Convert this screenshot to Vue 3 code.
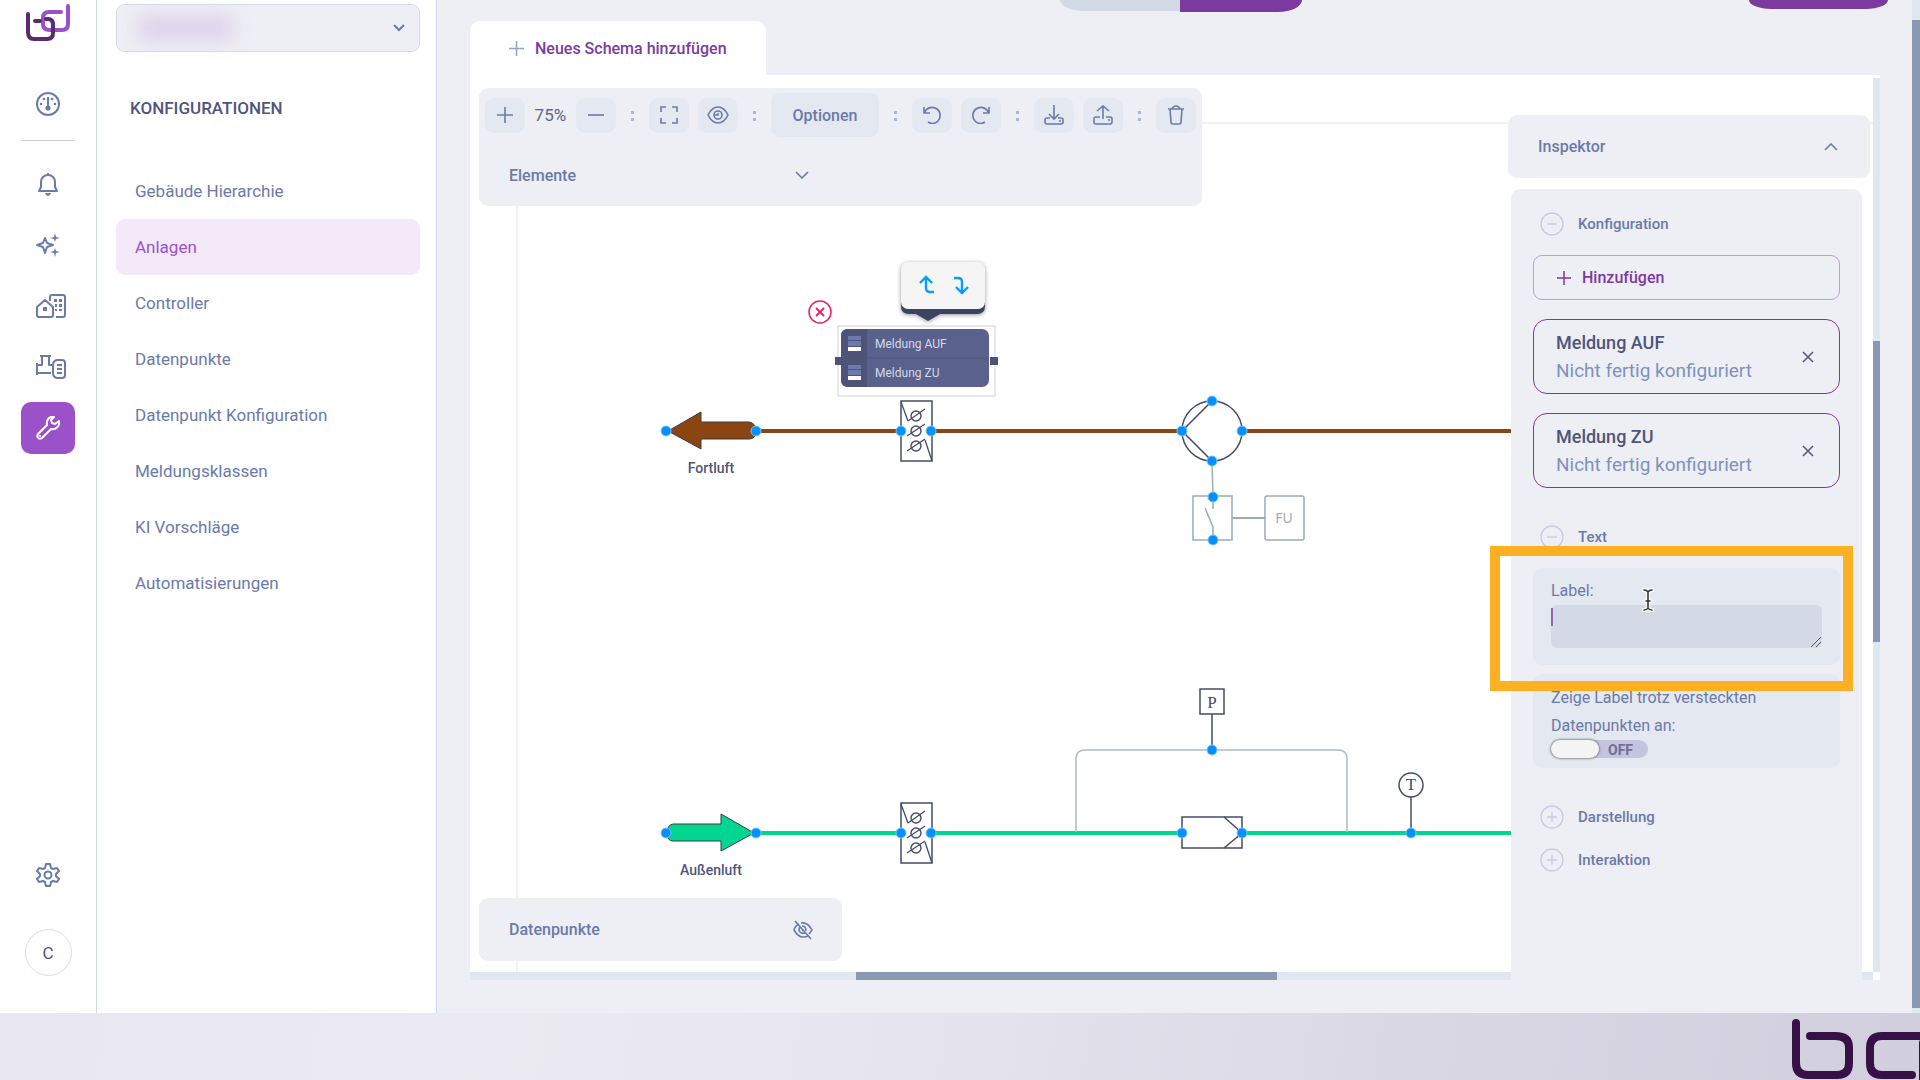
<script setup>
import { ref } from 'vue'

const navItems = [
  'Gebäude Hierarchie',
  'Anlagen',
  'Controller',
  'Datenpunkte',
  'Datenpunkt Konfiguration',
  'Meldungsklassen',
  'KI Vorschläge',
  'Automatisierungen',
]
const activeItem = ref('Anlagen')
const messages = ['Meldung AUF', 'Meldung ZU']
const label = ref('')
const showLabel = ref(false)

const ports = [
  [666, 431], [756, 431], [901, 431], [931, 431],
  [1182, 431], [1242, 431], [1212, 401], [1212, 461],
  [1213, 497], [1213, 540],
  [666, 833], [756, 833], [901, 833], [931, 833],
  [1182, 833], [1242, 833], [1212, 750], [1411, 833],
]
const dampers = [431, 833]
</script>

<template>
  <div class="page">
    <div class="app">
      <aside class="rail">
        <svg class="logo" width="44" height="38" viewBox="0 0 44 38" fill="none" stroke-width="4" stroke-linecap="round">
          <path d="M42 2v18q0 6-6 6H24q-7 0-7-6V14q0-6 6-6h12" stroke="#9b51c8" />
          <path d="M2 10v18q0 7 6 7h13q6 0 6-6V21q0-6-5-6h-2M9 17h5" stroke="#592b70" />
        </svg>
        <button class="rail-btn gauge" aria-label="Dashboard">
          <svg width="24" height="24" viewBox="0 0 24 24" fill="none" stroke="currentColor" stroke-width="2">
            <circle cx="12" cy="12" r="11" />
            <path d="M12 5v12" />
            <g fill="currentColor" stroke="none">
              <circle cx="12" cy="16" r="2.600" /><circle cx="8" cy="7" r="1.300" /><circle cx="16" cy="7" r="1.300" />
              <circle cx="5" cy="12" r="1.300" /><circle cx="19" cy="12" r="1.300" />
            </g>
          </svg>
        </button>
        <hr class="rail-line" />
        <nav class="rail-nav" aria-label="Hauptmenü">
          <button class="rail-btn" aria-label="Meldungen">
            <svg width="24" height="24" viewBox="0 0 24 24" fill="none" stroke="currentColor" stroke-width="2" stroke-linejoin="round">
              <path d="M12 1v2M3 19h18l-2-4v-5c0-4-3-7-7-7s-7 3-7 7v5z" />
              <path d="M9 21h6q-1 3-3 3t-3-3z" fill="currentColor" stroke="none" />
            </svg>
          </button>
          <button class="rail-btn" aria-label="Assistent">
            <svg width="24" height="24" viewBox="0 0 24 24" fill="none" stroke="currentColor" stroke-width="2" stroke-linejoin="round">
              <path d="M9 5l2 5 6 2-6 2-2 6-2-6-6-2 6-2z" />
              <path d="M19 0l1 4 4 1-4 1-1 3-1-3-4-1 4-1zM19 15l1 3 4 1-4 1-1 4-1-4-4-1 4-1z" fill="currentColor" stroke="none" />
            </svg>
          </button>
          <button class="rail-btn wide" aria-label="Gebäude">
            <svg width="30" height="24" viewBox="0 0 30 24" fill="none" stroke="currentColor" stroke-width="2" stroke-linejoin="round">
              <path d="M1 13l8-7 8 7v8q0 2-2 2H3q-2 0-2-2zM14 7V3q0-2 2-2h11q2 0 2 2v18q0 2-2 2h-7" />
              <path d="M7 13h4v4H7zM18 5h3v3h-3zM23 5h3v3h-3zM19 10h2v3h-2zM23 10h3v3h-3zM19 15h2v2h-2zM23 15h3v2h-3z" fill="currentColor" stroke="none" />
            </svg>
          </button>
          <button class="rail-btn wide" aria-label="Geräte">
            <svg width="30" height="24" viewBox="0 0 30 24" fill="none" stroke="currentColor" stroke-width="2" stroke-linejoin="round">
              <path d="M4 1h11M6 1v9H1M13 1v9h3M1 8v12M1 18h14" />
              <path d="M21 5h5q3 0 3 3v12q0 3-3 3h-5q-4-1-4-5v-8q0-4 4-5zM21 10h5M21 14h5M21 18h5" />
            </svg>
          </button>
          <button class="rail-btn active" aria-label="Konfiguration">
            <svg width="24" height="24" viewBox="0 0 24 24" fill="none" stroke="currentColor" stroke-width="2" stroke-linejoin="round">
              <path d="M18 1c-5-1-8 3-7 8l-9 9c-2 3 1 6 4 4l9-9c5 1 9-3 8-8l-4 3-3-1-1-3z" />
              <circle cx="4" cy="20" r="1" fill="currentColor" stroke="none" />
            </svg>
          </button>
        </nav>
        <div class="rail-foot">
          <button class="rail-btn" aria-label="Einstellungen">
            <svg width="24" height="24" viewBox="0 0 24 24" fill="none" stroke="currentColor" stroke-width="2" stroke-linejoin="round">
              <path d="M10 1h4l1 4 2 1 4-1 2 3-3 3v2l3 3-2 3-4-1-2 1-1 4h-4l-1-4-2-1-4 1-2-3 3-3v-2L1 8l2-3 4 1 2-1z" />
              <circle cx="12" cy="12" r="3.500" />
            </svg>
          </button>
          <button class="avatar">C</button>
        </div>
      </aside>

      <aside class="side">
        <div class="picker">
          <select aria-label="Gebäude auswählen"><option></option></select>
          <span class="picker-blur"></span>
          <svg width="12" height="8" viewBox="0 0 12 8" fill="none" stroke="#6b7aa9" stroke-width="2"><path d="M1 1l5 5 5-5" /></svg>
        </div>
        <h2>KONFIGURATIONEN</h2>
        <nav class="side-nav" aria-label="Konfigurationen">
          <a v-for="item in navItems" :key="item" href="#" :class="{ current: item === activeItem }" @click.prevent="activeItem = item">{{ item }}</a>
        </nav>
      </aside>

      <main class="main">
        <header class="top">
          <button class="tab">
            <svg width="15" height="15" viewBox="0 0 15 15" stroke="#8fa3c6" stroke-width="1.500"><path d="M7.500 0v15M0 7.500h15" /></svg>
            Neues Schema hinzufügen
          </button>
          <div class="modes">
            <button class="mode-off" aria-label="Ansicht"></button>
            <button class="mode-on" aria-label="Bearbeiten"></button>
          </div>
          <button class="save" aria-label="Speichern"></button>
        </header>

        <section class="stage">
          <div class="canvas">
            <svg class="diagram" width="100%" height="100%" fill="none">
              <g transform="translate(-470 -78)">
                <path d="M517 975V123h1360" stroke="#f1f2f4" stroke-width="2" />
                <path d="M756 431h800" stroke="#8b4513" stroke-width="4" />
                <path d="M756 833h800" stroke="#00d68f" stroke-width="4" />
                <path d="M668 431l33-19v10h48q7 1 7 9t-7 8h-48v10z" fill="#8b4513" stroke="#3c3c3c" />
                <path d="M754 833l-33-19v10h-48q-6 1-6 9t6 8h48v10z" fill="#00d68f" stroke="#3c3c3c" />

                <g v-for="y in dampers" :key="y" :transform="`translate(901 ${y - 30})`" stroke="#454b6b">
                  <rect width="31" height="60" fill="#fff" stroke-width="1.500" />
                  <path d="M0 1l7 19M24 39l7 21M7 20l17-12M6 35l18-12M6 50l18-12" stroke-width="1.300" />
                  <g stroke-width="1.400"><circle cx="15" cy="15" r="5" /><circle cx="15" cy="30" r="5" /><circle cx="15" cy="45" r="5" /></g>
                </g>

                <circle cx="1212" cy="431" r="30" fill="#fff" stroke="#454b6b" stroke-width="1.500" />
                <path d="M1212 401l-30 30 30 30" stroke="#454b6b" stroke-width="1.500" />
                <g stroke="#9dacb4" stroke-width="1.500">
                  <path d="M1212 461l1 36v12M1205 508l8 19v13" />
                  <path d="M1232 518h33" stroke-width="2" />
                  <rect x="1193" y="496" width="39" height="44" />
                  <rect x="1265" y="496" width="39" height="44" rx="2" />
                </g>
                <text class="fu" x="1284" y="523">FU</text>

                <path d="M1076 832V759q0-9 9-9h253q9 0 9 9v73" stroke="#b0bbc2" stroke-width="1.500" />
                <g stroke="#454b6b" stroke-width="1.500">
                  <rect x="1182" y="817" width="60" height="31" fill="#fff" />
                  <path d="M1224 817l18 16-18 15M1212 714v36M1411 797v36" />
                  <rect x="1200" y="689" width="24" height="25" />
                  <circle cx="1411" cy="785" r="12" />
                </g>
                <text class="sensor" x="1212" y="708">P</text>
                <text class="sensor" x="1411" y="790">T</text>

                <text class="caption" x="711" y="473">Fortluft</text>
                <text class="caption" x="711" y="875">Außenluft</text>

                <circle v-for="([x, y], i) in ports" :key="i" :cx="x" :cy="y" r="5" fill="#0090ff" stroke="#7cc4ff" />

                <rect x="838" y="326" width="157" height="70" fill="#fff" stroke="#cfcfe6" />
                <path d="M835 357h8v8h-8zM990 357h8v8h-8z" fill="#4e5376" />
                <rect x="841" y="329" width="148" height="58" rx="7" fill="#5a618c" />
                <path d="M867 329h-19q-7 0-7 7v44q0 7 7 7h19z" fill="#4e5478" />
                <path d="M867 358h122" stroke="#535981" />
                <g v-for="y in [336, 365]" :key="y">
                  <path :d="`M848 ${y}h13v4h-13zM848 ${y + 5}h13v5h-13z`" fill="#6b79ad" />
                  <path :d="`M848 ${y + 11}h13v4h-13z`" fill="#fff" />
                </g>
                <text class="point" x="875" y="348">Meldung AUF</text>
                <text class="point" x="875" y="377">Meldung ZU</text>

                <circle cx="820" cy="312" r="11" fill="#fff" stroke="#e91e63" stroke-width="1.500" />
                <path d="M816 308l8 8M824 308l-8 8" stroke="#e91e63" stroke-width="1.800" />

                <g class="bubble">
                  <path d="M901 300h84v6q0 8-8 8h-37l-12 7-12-7h-7q-8 0-8-8z" fill="#3d4263" />
                  <rect x="901" y="262" width="84" height="47" rx="7" fill="#f5f5f5" />
                </g>
                <path d="M934 292h-4q-4 0-4-4v-10M920 283l6-6 6 6M954 278h4q4 0 4 4v10M956 287l6 6 6-6" stroke="#0a9bff" stroke-width="2.400" />
              </g>
            </svg>
          </div>
          <div class="scroll-v"><i></i></div>
          <div class="scroll-h"><i></i></div>

          <div class="toolbar">
            <div class="tools">
              <button class="tool" aria-label="Vergrößern"><svg width="16" height="16" viewBox="0 0 16 16"><path d="M8 0v16M0 8h16" /></svg></button>
              <span class="zoom">75%</span>
              <button class="tool" aria-label="Verkleinern"><svg width="16" height="16" viewBox="0 0 16 16"><path d="M0 8h16" /></svg></button>
              <span class="dots"></span>
              <button class="tool" aria-label="Vollbild"><svg width="18" height="18" viewBox="0 0 18 18"><path d="M1 6V1h5M12 1h5v5M17 12v5h-5M6 17H1v-5" /></svg></button>
              <button class="tool next" aria-label="Vorschau"><svg width="22" height="18" viewBox="0 0 22 18"><path d="M1 9q4-8 10-8t10 8q-4 8-10 8T1 9z" /><circle cx="11" cy="9" r="4" /><path d="M11 7v2H8" /></svg></button>
              <span class="dots"></span>
              <button class="options">Optionen</button>
              <span class="dots"></span>
              <button class="tool" aria-label="Rückgängig"><svg width="18" height="18" viewBox="0 0 18 18"><path d="M1 1v6h6M1 7C4 1 10 0 14 3s4 9 1 12-7 3-10 1" /></svg></button>
              <button class="tool next" aria-label="Wiederholen"><svg width="18" height="18" viewBox="0 0 18 18"><path d="M17 1v6h-6M17 7C14 1 8 0 4 3s-4 9-1 12 7 3 10 1" /></svg></button>
              <span class="dots"></span>
              <button class="tool" aria-label="Exportieren"><svg width="20" height="20" viewBox="0 0 20 20"><path d="M10 0v14M5 9l5 5 5-5M6 13H3q-2 0-2 2v2q0 2 2 2h14q2 0 2-2v-2q0-2-2-2h-3M15 16h2" /></svg></button>
              <button class="tool next" aria-label="Importieren"><svg width="20" height="20" viewBox="0 0 20 20"><path d="M10 14V1M4 6l6-5 6 5M7 12H3q-2 0-2 2v3q0 2 2 2h14q2 0 2-2v-3q0-2-2-2h-4M15 15h2" /></svg></button>
              <span class="dots"></span>
              <button class="tool" aria-label="Löschen"><svg width="18" height="20" viewBox="0 0 18 20"><path d="M1 4h16M3 4l1 13q0 2 2 2h6q2 0 2-2l1-13M5 4q1-3 4-3t4 3" /></svg></button>
            </div>
            <button class="fold">Elemente
              <svg width="14" height="8" viewBox="0 0 14 8"><path d="M1 1l6 6 6-6" /></svg>
            </button>
          </div>

          <button class="points">Datenpunkte
            <svg width="20" height="20" viewBox="0 0 20 20"><path d="M2 1l16 18M6 4C3 5 1 9 1 10q4 7 9 7 3 0 5-1M8 3q7-1 11 7l-3 4M7 7q-2 3 0 5t5 1M9 6q4 0 4 5M9 9l1 2" /></svg>
          </button>

          <aside class="inspector">
            <button class="inspector-head">Inspektor
              <svg width="14" height="8" viewBox="0 0 14 8"><path d="M1 7l6-6 6 6" /></svg>
            </button>
            <div class="inspector-body">
              <button class="section-head"><svg width="24" height="24" viewBox="0 0 24 24"><circle cx="12" cy="12" r="11" /><path d="M7 12h10" /></svg>Konfiguration</button>
              <button class="add"><svg width="14" height="14" viewBox="0 0 14 14"><path d="M7 0v14M0 7h14" /></svg>Hinzufügen</button>
              <article v-for="m in messages" :key="m" class="card">
                <div><h3>{{ m }}</h3><p>Nicht fertig konfiguriert</p></div>
                <button aria-label="Entfernen"><svg width="12" height="12" viewBox="0 0 12 12"><path d="M1 1l10 10M11 1L1 11" /></svg></button>
              </article>
              <button class="section-head spaced"><svg width="24" height="24" viewBox="0 0 24 24"><circle cx="12" cy="12" r="11" /><path d="M7 12h10" /></svg>Text</button>
              <div class="box label-box">
                <label for="label">Label:</label>
                <div class="area">
                  <textarea id="label" v-model="label"></textarea>
                  <span class="caret"></span>
                  <svg class="grip" width="10" height="10" viewBox="0 0 10 10" stroke="#555" fill="none"><path d="M0 10L10 0M5 10l5-5" /></svg>
                </div>
                <svg class="cursor" width="12" height="24" viewBox="0 0 12 24" fill="none" stroke-linecap="round">
                  <path d="M2 2q3 0 4 2 1-2 4-2M6 4v16M2 22q3 0 4-2 1 2 4 2M4 13h4" stroke="#fff" stroke-width="4" />
                  <path d="M2 2q3 0 4 2 1-2 4-2M6 4v16M2 22q3 0 4-2 1 2 4 2M4 13h4" stroke="#333" stroke-width="1.600" />
                </svg>
                <div class="highlight"></div>
              </div>
              <div class="box toggle-box">
                <label for="show">Zeige Label trotz versteckten Datenpunkten an:</label>
                <div class="toggle">
                  <input id="show" v-model="showLabel" type="checkbox" />
                  <span>{{ showLabel ? 'ON' : 'OFF' }}</span>
                </div>
              </div>
              <button class="section-head spaced"><svg width="24" height="24" viewBox="0 0 24 24"><circle cx="12" cy="12" r="11" /><path d="M7 12h10M12 7v10" /></svg>Darstellung</button>
              <button class="section-head near"><svg width="24" height="24" viewBox="0 0 24 24"><circle cx="12" cy="12" r="11" /><path d="M7 12h10M12 7v10" /></svg>Interaktion</button>
            </div>
          </aside>
        </section>
      </main>
      <div class="page-scroll"><i></i></div>
    </div>

    <footer class="brand">
      <svg width="128" height="67" viewBox="0 0 128 67" fill="none" stroke="#351146" stroke-width="8" stroke-linecap="round">
        <path d="M4 10v40q0 12 12 12h29q12 0 12-12V34q0-11-14-11H18" />
        <path d="M132 23H90q-12 0-12 12v15q0 12 12 12h30" />
        <path d="M131 30v40" />
      </svg>
    </footer>
  </div>
</template>

<style>
body {
  margin: 0;
  overflow: hidden;
}
</style>

<style scoped>
* {
  box-sizing: border-box;
}
.page {
  display: flex;
  flex-direction: column;
  min-height: 100vh;
  font-family: Roboto, "Liberation Sans", sans-serif;
  font-size: 17px;
  color: #6b7aa9;
}
button {
  border: 0;
  padding: 0;
  background: none;
  font: inherit;
  color: inherit;
}
svg {
  display: block;
  flex: none;
}
.app {
  flex: 1;
  display: flex;
  background: #eeeff5;
}

.rail {
  width: 97px;
  flex: none;
  display: flex;
  flex-direction: column;
  align-items: center;
  padding: 4px 0 37px;
  background: #fff;
  border-right: 1px solid #cfd8e6;
}
.rail-btn {
  width: 54px;
  height: 52px;
  display: flex;
  align-items: center;
  justify-content: center;
  border-radius: 10px;
}
.rail-btn.wide {
  padding-left: 6px;
}
.rail-btn.active {
  background: #9b51c8;
  color: #fff;
}
.gauge {
  margin-top: 36px;
}
.rail-line {
  width: 54px;
  height: 1px;
  margin: 10px 0 17px;
  border: 0;
  background: #cdcddb;
}
.rail-nav {
  display: flex;
  flex-direction: column;
  gap: 9px;
}
.rail-foot {
  margin-top: auto;
  display: flex;
  flex-direction: column;
  align-items: center;
  gap: 28px;
}
.avatar {
  width: 47px;
  height: 47px;
  border: 1px solid #dcdcea;
  border-radius: 50%;
  color: #4f557c;
}

.side {
  width: 340px;
  flex: none;
  padding: 4px 16px 0 19px;
  background: #fff;
  border-right: 1px solid #cfd8e6;
}
.picker {
  position: relative;
}
.picker select {
  display: block;
  width: 100%;
  height: 48px;
  appearance: none;
  border: 1px solid #d3dbe8;
  border-radius: 8px;
  background: #eeeff5;
}
.picker-blur {
  position: absolute;
  left: 22px;
  top: 12px;
  width: 94px;
  height: 24px;
  background: #dccfea;
  filter: blur(10px);
}
.picker svg {
  position: absolute;
  right: 15px;
  top: 20px;
}
.side h2 {
  margin: 44px 0 0 14px;
  font-size: 17px;
  line-height: 24px;
  font-weight: 500;
  color: #4f557c;
}
.side-nav {
  margin-top: 43px;
  display: flex;
  flex-direction: column;
}
.side-nav a {
  height: 56px;
  padding-left: 19px;
  line-height: 56px;
  border-radius: 9px;
  text-decoration: none;
  color: #6b7aa9;
}
.side-nav a.current {
  background: #f3e9f9;
  color: #9b51c8;
}

.main {
  flex: 1;
  min-width: 0;
  display: flex;
  flex-direction: column;
  padding: 0 32px 33px 33px;
}
.top {
  position: relative;
  height: 75px;
  display: flex;
  align-items: flex-start;
}
.tab {
  width: 296px;
  height: 54px;
  margin-top: 21px;
  display: flex;
  align-items: center;
  gap: 11px;
  padding-left: 39px;
  background: #fff;
  border-radius: 10px 10px 0 0;
  font-size: 16px;
  font-weight: 500;
  color: #7c3aa0;
}
.modes {
  margin-left: 294px;
  display: flex;
  align-items: flex-start;
}
.mode-off {
  width: 120px;
  height: 11px;
  background: #d3d9e5;
  border-bottom-left-radius: 26px 11px;
}
.mode-on {
  width: 122px;
  height: 12px;
  background: #7c3aa0;
  border-bottom-right-radius: 24px 12px;
}
.save {
  position: absolute;
  right: -8px;
  top: 0;
  width: 139px;
  height: 9px;
  background: #7c3aa0;
  border-radius: 0 0 22px 22px / 0 0 9px 9px;
}

.stage {
  position: relative;
  flex: 1;
  display: grid;
  grid-template: 1fr 8px / 1fr 7px;
  padding-top: 3px;
  background: #fff;
}
.canvas {
  position: relative;
  overflow: hidden;
}
.diagram {
  position: absolute;
  inset: 0;
}
.scroll-v {
  background: #e1e7ef;
}
.scroll-v i {
  display: block;
  height: 301px;
  margin-top: 263px;
  background: #8b98b4;
}
.scroll-h {
  background: #e1e7ef;
}
.scroll-h i {
  display: block;
  width: 421px;
  height: 8px;
  margin-left: 386px;
  background: #8b98b4;
}
text {
  font-family: Roboto, "Liberation Sans", sans-serif;
}
.caption {
  font-size: 14px;
  font-weight: 500;
  fill: #4f557c;
  text-anchor: middle;
}
.point {
  font-size: 12px;
  fill: #d3d9e8;
}
.fu {
  font-family: "Noto Sans", sans-serif;
  font-size: 14px;
  fill: #9dacb4;
  text-anchor: middle;
}
.sensor {
  font-family: "Liberation Serif", serif;
  font-size: 17px;
  fill: #454b6b;
  text-anchor: middle;
}
.bubble {
  filter: drop-shadow(0 1px 2px #0006);
}

.toolbar {
  position: absolute;
  left: 9px;
  top: 13px;
  width: 723px;
  height: 118px;
  padding: 5px 6px;
  background: #eeeff5;
  border-radius: 9px;
}
.tools {
  display: flex;
  align-items: center;
}
.tool {
  width: 40px;
  height: 35px;
  display: flex;
  align-items: center;
  justify-content: center;
  background: #e4e8f0;
  border-radius: 9px;
}
.tool.next {
  margin-left: 9px;
}
.tool svg,
.fold svg,
.points svg,
.inspector-head svg {
  fill: none;
  stroke: #6b7aa9;
  stroke-width: 1.600;
}
.zoom {
  width: 51px;
  text-align: center;
  color: #5d6489;
}
.dots {
  width: 33px;
  height: 12px;
  background: radial-gradient(circle 2px, #a9b8d2 90%, transparent) center top / 33px 7px;
}
.options {
  width: 109px;
  height: 44px;
  background: #e4e8f0;
  border-radius: 9px;
  font-size: 16px;
  font-weight: 500;
}
.fold {
  width: 324px;
  height: 60px;
  margin-top: 8px;
  padding-left: 24px;
  display: flex;
  align-items: center;
  justify-content: space-between;
  font-size: 16px;
  font-weight: 500;
}
.points {
  position: absolute;
  left: 9px;
  bottom: 19px;
  width: 363px;
  height: 63px;
  padding: 0 29px 0 30px;
  display: flex;
  align-items: center;
  justify-content: space-between;
  background: #eeeff5;
  border-radius: 9px;
  font-size: 16px;
  font-weight: 500;
}

.inspector {
  position: absolute;
  right: 10px;
  top: 40px;
  bottom: 0;
  width: 362px;
  display: flex;
  flex-direction: column;
}
.inspector-head {
  height: 63px;
  flex: none;
  padding: 0 32px 0 30px;
  display: flex;
  align-items: center;
  justify-content: space-between;
  background: #eeeff5;
  border-radius: 9px;
  font-size: 16px;
  font-weight: 500;
}
.inspector-body {
  flex: 1;
  margin: 11px 8px 0 3px;
  padding: 17px 22px 0;
  display: flex;
  flex-direction: column;
  background: #eeeff5;
  border-radius: 9px 9px 0 0;
}
.section-head {
  height: 36px;
  margin-bottom: 13px;
  padding-left: 7px;
  display: flex;
  align-items: center;
  gap: 14px;
  font-size: 15px;
  font-weight: 500;
}
.section-head.spaced {
  margin-top: 31px;
}
.section-head.near {
  margin-top: -6px;
}
.section-head svg {
  fill: none;
  stroke: #cdc8e3;
  stroke-width: 1.400;
}
.add {
  height: 45px;
  padding-left: 23px;
  display: flex;
  align-items: center;
  gap: 11px;
  border: 1px solid #c39bdc;
  border-radius: 9px;
  font-size: 16px;
  font-weight: 500;
  color: #7c3aa0;
}
.add svg {
  stroke: #7c3aa0;
  stroke-width: 1.500;
}
.card {
  height: 75px;
  margin-top: 19px;
  padding: 0 25px 0 22px;
  display: flex;
  align-items: center;
  justify-content: space-between;
  border: 1px solid #7c3aa0;
  border-radius: 14px;
}
.card h3,
.card p {
  margin: 0;
  line-height: 28px;
}
.card h3 {
  font-size: 18px;
  font-weight: 500;
  color: #4f557c;
}
.card p {
  font-size: 19px;
  color: #7f92bb;
}
.card button svg {
  stroke: #4f557c;
  stroke-width: 1.500;
}
.box {
  position: relative;
  padding: 0 18px;
  background: #e4e8f0;
  border-radius: 9px;
  font-size: 16px;
}
.box label {
  display: block;
  line-height: 28px;
}
.label-box {
  height: 97px;
  padding-top: 9px;
}
.area {
  position: relative;
}
.area textarea {
  display: block;
  width: 100%;
  height: 43px;
  border: 0;
  border-radius: 6px;
  padding: 4px;
  resize: none;
  background: #d3d9e5;
  font: inherit;
}
.caret {
  position: absolute;
  left: 0;
  top: 3px;
  width: 2px;
  height: 18px;
  background: #8e6ba8;
}
.grip {
  position: absolute;
  right: 1px;
  bottom: 1px;
}
.cursor {
  position: absolute;
  left: 109px;
  top: 20px;
}
.highlight {
  position: absolute;
  z-index: 2;
  inset: -22px -13px -26px -43px;
  border: 10px solid #fdb022;
  pointer-events: none;
}
.toggle-box {
  height: 94px;
  margin-top: 9px;
  padding-top: 10px;
}
.toggle {
  position: relative;
  width: 97px;
}
.toggle input {
  display: block;
  width: 97px;
  height: 18px;
  margin: 0;
  appearance: none;
  border-radius: 9px;
  background: #c5c4e0;
}
.toggle input::before {
  content: "";
  display: block;
  width: 48px;
  height: 18px;
  border-radius: 9px;
  background: #f4f4f4;
  box-shadow: 0 0 2px 1px #777c;
}
.toggle span {
  position: absolute;
  left: 57px;
  top: 1px;
  font-size: 14px;
  line-height: 18px;
  font-weight: 700;
  color: #6f6f96;
}

.page-scroll {
  width: 8px;
  flex: none;
  display: flex;
  padding: 20px 0 5px;
  background: #e1e7ef;
}
.page-scroll i {
  flex: 1;
  background: #8b98b4;
}
.brand {
  height: 67px;
  display: flex;
  justify-content: flex-end;
  overflow: hidden;
  background: linear-gradient(100deg, #e9e8f1, #ebeaf1 25%, #e7e5ef 45%, #d9d7e4 75%, #d1cfdd);
}
</style>
